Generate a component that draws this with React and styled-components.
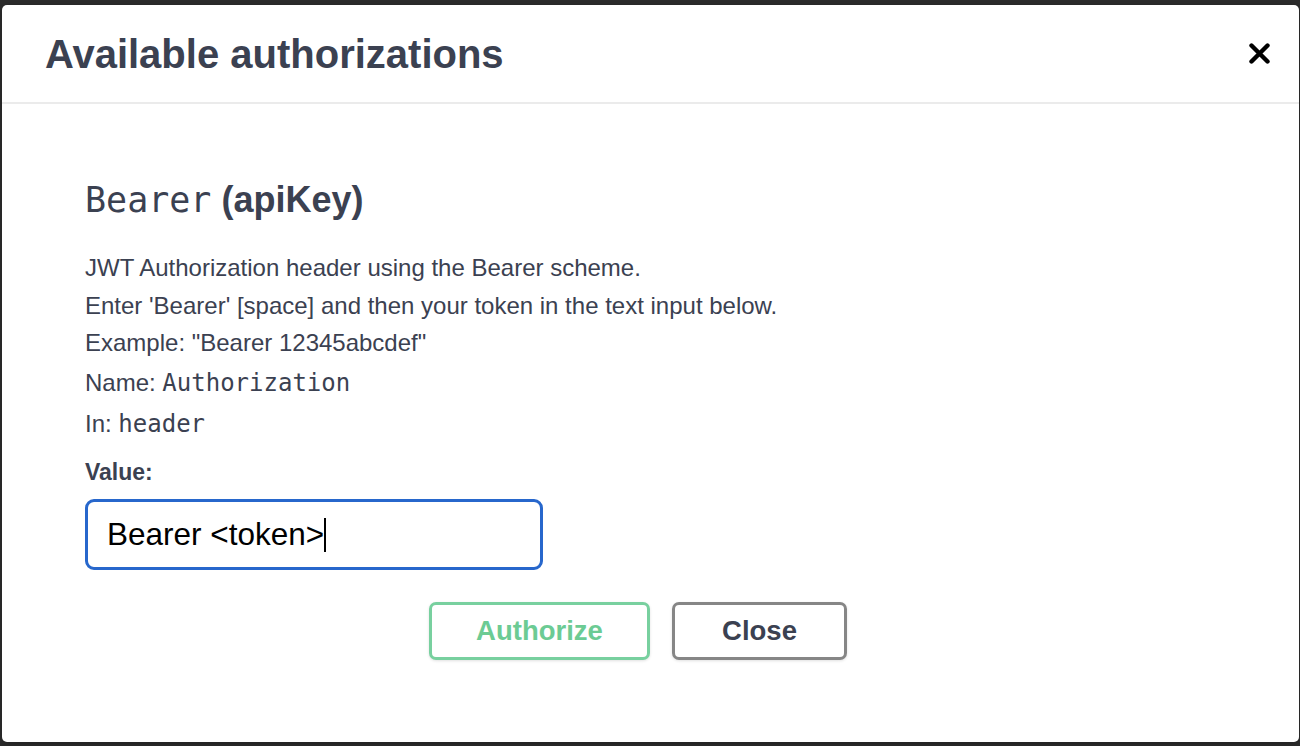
import React from "react";
import styled, { createGlobalStyle } from "styled-components";

const GlobalStyle = createGlobalStyle`
  html, body {
    margin: 0;
    padding: 0;
    background: #2c2c2c;
  }
  * {
    box-sizing: border-box;
  }
`;

const Backdrop = styled.div`
  height: 746px;
  padding: 5px 1px 4px 2px;
  background: #2c2c2c;
  font-family: "Liberation Sans", Arial, sans-serif;
  color: #3b4151;
`;

const Modal = styled.div`
  height: 100%;
  background: #fff;
  border-radius: 5px;
  box-shadow: 0 2px 8px rgba(0, 0, 0, 0.25);
  display: flex;
  flex-direction: column;
`;

const Header = styled.div`
  height: 99px;
  display: flex;
  align-items: center;
  justify-content: space-between;
  padding: 2px 28px 0 43px;
  border-bottom: 2px solid #ebebeb;
`;

const Title = styled.h3`
  margin: 0;
  font-size: 40px;
  font-weight: 700;
  color: #3b4151;
`;

const CloseIcon = styled.button`
  border: none;
  background: none;
  padding: 0;
  width: 24px;
  height: 24px;
  display: flex;
  align-items: center;
  justify-content: center;
  cursor: pointer;
  margin-top: -3px;
`;

const Content = styled.div`
  padding: 74px 83px 0 83px;
  display: flex;
  flex-direction: column;
`;

const SchemeTitle = styled.h4`
  margin: 0;
  height: 44px;
  line-height: 44px;
  font-size: 36px;
  font-weight: 700;
  color: #3b4151;
`;

const Code = styled.code`
  font-family: "DejaVu Sans Mono", "Liberation Mono", monospace;
  font-weight: 400;
  font-size: ${(p) => p.size || 24}px;
`;

const Markdown = styled.div`
  margin-top: 27px;
  font-size: 24px;
  line-height: 37.5px;
`;

const InfoRow = styled.div`
  font-size: 24px;
  line-height: 41px;
  height: 41px;
`;

const Label = styled.label`
  display: block;
  margin-top: 13px;
  font-size: 23px;
  font-weight: 700;
  line-height: 30px;
`;

const ValueBox = styled.div`
  margin-top: 12px;
  width: 458px;
  height: 71px;
  border: 3px solid #2767cc;
  border-radius: 9px;
  padding: 0 19px;
  display: flex;
  align-items: center;
  font-size: 31.5px;
  color: #000;
`;

const Caret = styled.span`
  display: inline-block;
  width: 2px;
  height: 34px;
  background: #000;
  margin-top: 2px;
`;

const ButtonRow = styled.div`
  margin-top: 32px;
  display: flex;
  justify-content: center;
  gap: 22px;
  padding-right: 25px;
`;

const ModalButton = styled.button`
  width: ${(p) => p.width}px;
  height: 58px;
  background: #fff;
  border: 3px solid ${(p) => p.border};
  color: ${(p) => p.color};
  border-radius: 7px;
  font-family: "Liberation Sans", Arial, sans-serif;
  font-size: 27.5px;
  font-weight: 700;
  box-shadow: 0 1px 3px rgba(0, 0, 0, 0.12);
  cursor: pointer;
  padding: 0;
`;

export default function App() {
  return (
    <>
      <GlobalStyle />
      <Backdrop>
        <Modal>
          <Header>
            <Title>Available authorizations</Title>
            <CloseIcon aria-label="Close">
              <svg width="21" height="21" viewBox="0 0 21 21">
                <path
                  d="M2.5 2.5 L18.5 18.5 M18.5 2.5 L2.5 18.5"
                  stroke="#000"
                  strokeWidth="4.4"
                  strokeLinecap="round"
                />
              </svg>
            </CloseIcon>
          </Header>
          <Content>
            <SchemeTitle>
              <Code size={35}>Bearer</Code>  (apiKey)
            </SchemeTitle>
            <Markdown>
              JWT Authorization header using the Bearer scheme.
              <br />
              Enter 'Bearer' [space] and then your token in the text input below.
              <br />
              Example: "Bearer 12345abcdef"
            </Markdown>
            <InfoRow>
              Name: <Code>Authorization</Code>
            </InfoRow>
            <InfoRow>
              In: <Code>header</Code>
            </InfoRow>
            <Label>Value:</Label>
            <ValueBox role="textbox">
              Bearer &lt;token&gt;
              <Caret />
            </ValueBox>
            <ButtonRow>
              <ModalButton width={221} border="#78d09f" color="#6ccb94">
                Authorize
              </ModalButton>
              <ModalButton width={175} border="#868686" color="#3b4151">
                Close
              </ModalButton>
            </ButtonRow>
          </Content>
        </Modal>
      </Backdrop>
    </>
  );
}
